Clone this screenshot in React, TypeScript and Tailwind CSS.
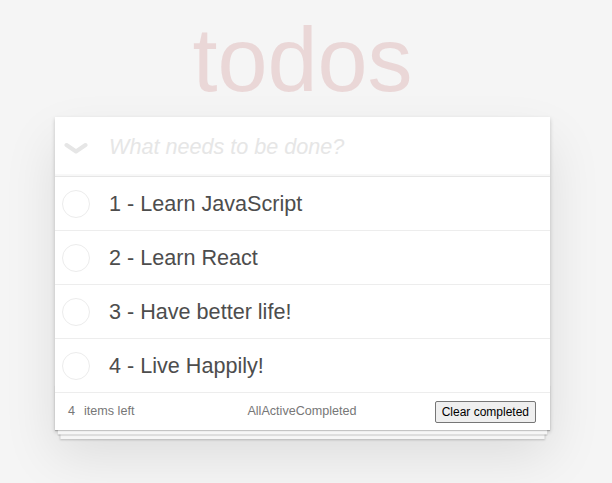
import { useState } from 'react'

// ── Data ────────────────────────────────────────────────────────────────────

const TODOS = [
  { id: 1, title: '1 - Learn JavaScript' },
  { id: 2, title: '2 - Learn React' },
  { id: 3, title: '3 - Have better life!' },
  { id: 4, title: '4 - Live Happily!' },
]

// ── Component ───────────────────────────────────────────────────────────────

export default function App() {
  const [text, setText] = useState('')

  return (
    <div className="min-h-[483px] bg-[#f5f5f5] font-['Liberation_Sans',Arial,sans-serif] text-[#4d4d4d]">
      <div className="ml-[55px] w-[495px] pt-[15px]">
        {/* Title */}
        <h1 className="text-center text-[90px] leading-[90px] font-thin text-[rgba(175,47,47,0.15)] h-[102px]">
          todos
        </h1>

        {/* Card */}
        <div className="relative bg-white shadow-[0_2px_4px_0_rgba(0,0,0,0.2),0_25px_50px_0_rgba(0,0,0,0.1)]">
          {/* Header */}
          <div className="relative h-[60px] border-b border-[#e6e6e6] shadow-[inset_0_-2px_1px_rgba(0,0,0,0.03)]">
            <svg className="absolute left-[9px] top-[25px]" width="24" height="14" viewBox="0 0 24 14">
              <path d="M2.5 3 L12 9.5 L21.5 3" fill="none" stroke="#e6e6e6" strokeWidth="4" strokeLinecap="round" strokeLinejoin="round" />
            </svg>
            <input
              autoFocus
              value={text}
              onChange={e => setText(e.target.value)}
              placeholder="What needs to be done?"
              className="w-full h-full pl-[54px] pr-4 text-[21.6px] bg-transparent outline-none text-[#4d4d4d] caret-[#333] placeholder:italic placeholder:text-[#e6e6e6]"
            />
          </div>

          {/* List */}
          <ul>
            {TODOS.map(t => (
              <li key={t.id} className="flex items-center h-[54px] border-b border-[#ededed]">
                <span className="ml-[7px] w-[28px] h-[28px] rounded-full border border-[#ececec] shrink-0" />
                <label className="ml-[19px] text-[21.6px] leading-[26px] text-[#4d4d4d]">{t.title}</label>
              </li>
            ))}
          </ul>

          {/* Footer */}
          <div className="relative grid grid-cols-3 items-center h-[37px] pl-[13px] pr-[14px] text-[12.6px] text-[#777]">
            <div className="pointer-events-none absolute left-0 right-0 bottom-0 h-[45px] shadow-[0_1px_1px_rgba(0,0,0,0.2),0_7.2px_0_-2.7px_#f6f6f6,0_8.1px_1px_-2.7px_rgba(0,0,0,0.2),0_14.4px_0_-5.4px_#f6f6f6,0_15.3px_2px_-5.4px_rgba(0,0,0,0.2)]" />
            <span>
              <strong className="font-normal">4</strong>
              <span className="ml-[9px]">items left</span>
            </span>
            <span className="text-center">AllActiveCompleted</span>
            <span className="flex justify-end">
              <button className="relative h-[22px] px-[6px] text-[12px] text-black bg-[#efefef] border border-[#767676] rounded-[2px] font-['Liberation_Sans',Arial,sans-serif]">
                Clear completed
              </button>
            </span>
          </div>
        </div>
      </div>
    </div>
  )
}
